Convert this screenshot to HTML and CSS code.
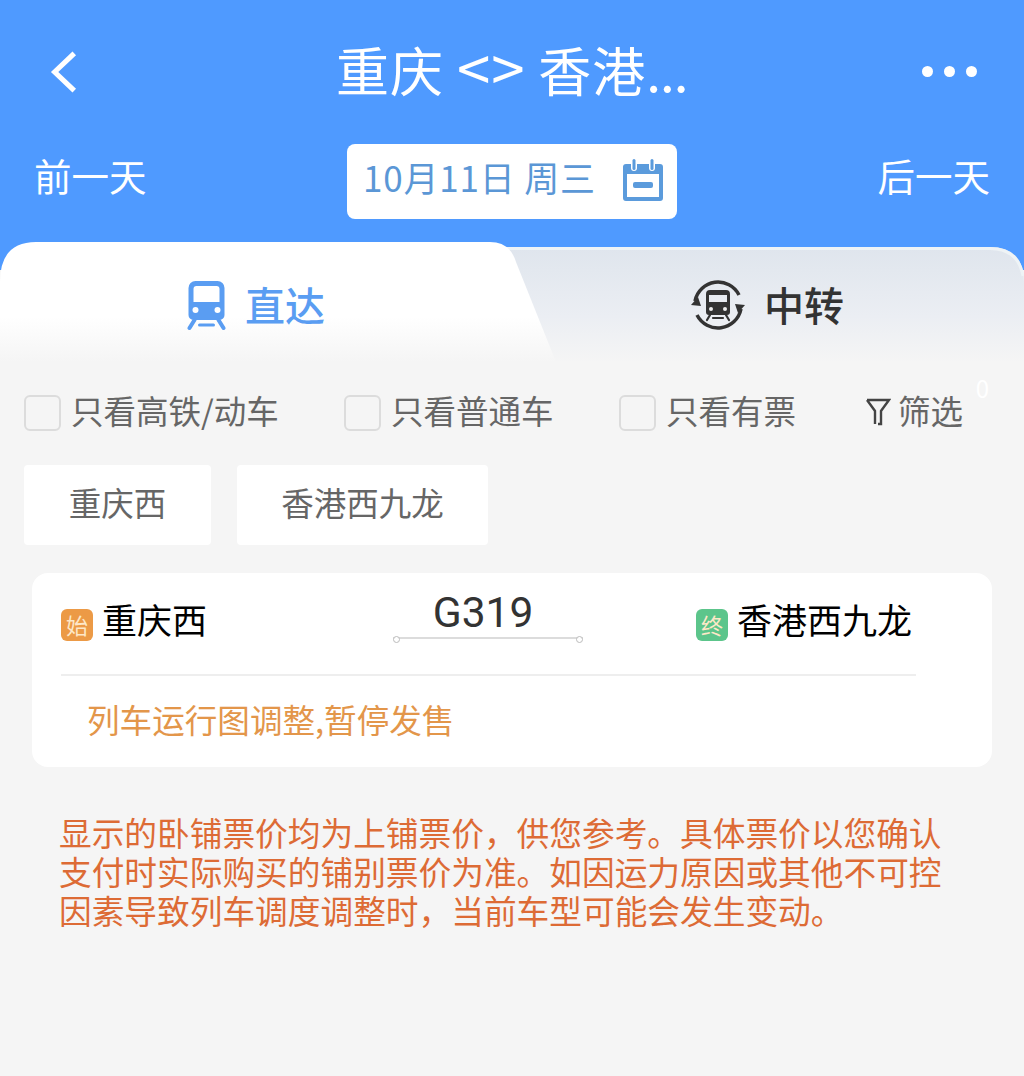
FILE: index.html
```html
<!DOCTYPE html>
<html lang="zh-CN">
<head>
    <meta charset="UTF-8">
    <meta name="viewport" content="width=device-width, initial-scale=1.0">
    <title>重庆 &lt;&gt; 香港</title>
    <link rel="stylesheet" href="styles.css">
</head>
<body>
    <header class="header">
        <div class="nav">
            <svg class="back" viewBox="0 0 30 44"><path d="M26 2 L5 22 L26 42" fill="none" stroke="#fff" stroke-width="5.5"/></svg>
            <h1 class="title">重庆 <span class="arrows">&lt;&gt;</span> 香港<span class="dots">...</span></h1>
            <div class="more"><span></span><span></span><span></span></div>
        </div>
        <div class="dates">
            <span class="day-link">前一天</span>
            <div class="date-box">
                <span>10月11日 周三</span>
                <svg class="cal" viewBox="0 0 42 44">
                    <path d="M4 6 H38 A3 3 0 0 1 41 9 V40 A3 3 0 0 1 38 43 H4 A3 3 0 0 1 1 40 V9 A3 3 0 0 1 4 6 Z M5 16 V39 H37 V16 Z" fill="#5b9bdc" fill-rule="evenodd"/>
                    <rect x="9" y="0" width="6" height="13" rx="3" fill="#fff"/>
                    <rect x="27" y="0" width="6" height="13" rx="3" fill="#fff"/>
                    <rect x="10.5" y="1" width="3" height="11" rx="1.5" fill="#5b9bdc"/>
                    <rect x="28.5" y="1" width="3" height="11" rx="1.5" fill="#5b9bdc"/>
                    <rect x="11" y="24" width="20" height="6" rx="2" fill="#5b9bdc"/>
                </svg>
            </div>
            <span class="day-link">后一天</span>
        </div>
    </header>

    <div class="tabs">
        <svg class="tabs-bg" viewBox="0 0 1024 120" preserveAspectRatio="none">
            <defs>
                <linearGradient id="greyFade" x1="0" y1="0" x2="0" y2="1">
                    <stop offset="0" stop-color="#dfe5ed"/>
                    <stop offset="0.6" stop-color="#ebeef3"/>
                    <stop offset="1" stop-color="#f5f5f5"/>
                </linearGradient>
                <linearGradient id="whiteFade" x1="0" y1="0" x2="0" y2="1">
                    <stop offset="0" stop-color="#fff"/>
                    <stop offset="0.62" stop-color="#fff"/>
                    <stop offset="1" stop-color="#f5f5f5"/>
                </linearGradient>
            </defs>
            <path d="M480 5 H990 Q1024 5 1024 40 V120 H480 Z" fill="url(#greyFade)"/>
            <path d="M480 6.5 H990 Q1018 6.5 1023 34" fill="none" stroke="#eef3f6" stroke-width="3"/>
            <path d="M0 120 V40 Q0 0 36 0 H490 Q510 0 516 20 L556 120 Z" fill="url(#whiteFade)"/>
        </svg>
        <div class="tab tab-on">
            <svg class="tab-icon" viewBox="0 0 40 50">
                <path d="M9 1 H31 A7 7 0 0 1 38 8 V35 A5 5 0 0 1 33 40 H7 A5 5 0 0 1 2 35 V8 A7 7 0 0 1 9 1 Z M7 9 V22 H33 V9 A3 3 0 0 0 30 6 H10 A3 3 0 0 0 7 9 Z" fill="#5a9df2" fill-rule="evenodd"/>
                <circle cx="9" cy="30" r="3" fill="#fff"/>
                <circle cx="31" cy="30" r="3" fill="#fff"/>
                <path d="M8 40 L3 48 M32 40 L37 48" stroke="#5a9df2" stroke-width="4" stroke-linecap="round"/>
                <path d="M13 45 H27" stroke="#5a9df2" stroke-width="3" stroke-linecap="round"/>
            </svg>
            <span>直达</span>
        </div>
        <div class="tab tab-off">
            <svg class="tab-icon-round" viewBox="0 0 56 52">
                <path d="M5 22 A23.5 23.5 0 0 1 49 16" fill="none" stroke="#333" stroke-width="3.5"/>
                <path d="M51 30 A23.5 23.5 0 0 1 7 36" fill="none" stroke="#333" stroke-width="3.5"/>
                <path d="M1 26 L8 18 L11 27 Z M55 26 L48 34 L45 25 Z" fill="#333"/>
                <path d="M20 11 H36 A4 4 0 0 1 40 15 V33 A3 3 0 0 1 37 36 H19 A3 3 0 0 1 16 33 V15 A4 4 0 0 1 20 11 Z M19 16 V23 H37 V16 Z" fill="#333" fill-rule="evenodd"/>
                <circle cx="21" cy="30" r="2" fill="#eee"/>
                <circle cx="35" cy="30" r="2" fill="#eee"/>
                <path d="M20 36 L17 41 M36 36 L39 41 M23 39 H33" stroke="#333" stroke-width="2.2" stroke-linecap="round"/>
            </svg>
            <span>中转</span>
        </div>
    </div>

    <div class="filters">
        <label class="check check-a"><i class="box"></i>只看高铁/动车</label>
        <label class="check check-b"><i class="box"></i>只看普通车</label>
        <label class="check check-c"><i class="box"></i>只看有票</label>
        <div class="screen">
            <svg class="funnel" viewBox="0 0 26 30"><path d="M2 3 H24 L16 14 V27 H13 M16 14 M10 27 V14 L2 3" fill="none" stroke="#444" stroke-width="2.4"/></svg>
            <span>筛选</span>
            <sup class="count">0</sup>
        </div>
    </div>

    <div class="chips">
        <div class="chip chip-start">重庆西</div>
        <div class="chip chip-end">香港西九龙</div>
    </div>

    <section class="card">
        <div class="route">
            <div class="stop stop-from">
                <span class="badge badge-start">始</span>
                <span>重庆西</span>
            </div>
            <div class="train">
                <div class="train-no">G319</div>
                <div class="train-line"></div>
            </div>
            <div class="stop stop-to">
                <span class="badge badge-end">终</span>
                <span>香港西九龙</span>
            </div>
        </div>
        <div class="status">列车运行图调整,暂停发售</div>
    </section>

    <p class="notice">显示的卧铺票价均为上铺票价，供您参考。具体票价以您确认<br>支付时实际购买的铺别票价为准。如因运力原因或其他不可控<br>因素导致列车调度调整时，当前车型可能会发生变动。</p>
</body>
</html>
```

FILE: styles.css
```css
* {
    box-sizing: border-box;
}
html, body {
    margin: 0;
    height: 1076px;
    overflow: hidden;
}
body {
    background-color: #f5f5f5;
    font-family: "Noto Sans CJK SC", "Noto Sans", sans-serif;
}
.header {
    height: 270px;
    background-color: #4f9aff;
    padding-top: 30px;
    color: #fff;
}
.nav {
    display: flex;
    align-items: center;
    height: 84px;
    padding: 0 47px 0 50px;
}
.back {
    width: 28px;
    height: 42px;
}
.title {
    margin: -6px 0 0 258px;
    font-size: 53px;
    font-weight: 400;
    letter-spacing: 1px;
    line-height: 84px;
    white-space: nowrap;
}
.arrows {
    font-size: 60px;
    line-height: 60px;
}
.dots {
    letter-spacing: -1px;
}
.more {
    display: flex;
    gap: 11px;
    margin-left: auto;
    margin-top: -2px;
}
.more span {
    width: 11px;
    height: 11px;
    border-radius: 50%;
    background-color: #fff;
}
.dates {
    display: flex;
    align-items: center;
    justify-content: space-between;
    height: 76px;
    margin-top: 29px;
    padding: 0 34px;
}
.day-link {
    margin-top: -12px;
    font-size: 37.5px;
    line-height: 76px;
}
.date-box {
    display: flex;
    align-items: center;
    gap: 26px;
    width: 330px;
    height: 75px;
    padding-left: 16px;
    background-color: #fff;
    border-radius: 8px;
    color: #5b97d6;
    font-size: 35px;
    letter-spacing: 0.8px;
    white-space: nowrap;
}
.date-box span {
    margin-top: -10px;
}
.cal {
    width: 42px;
    height: 44px;
    flex: none;
    margin-top: -3px;
}
.tabs {
    position: relative;
    display: flex;
    height: 113px;
    margin-top: -28px;
}
.tabs-bg {
    position: absolute;
    left: 0;
    top: 0;
    width: 100%;
    height: 120px;
}
.tab {
    position: relative;
    display: flex;
    align-items: center;
    height: 126px;
    font-size: 40px;
    font-weight: 500;
}
.tab-on {
    width: 512px;
    padding-left: 186px;
    gap: 18px;
    color: #5a9df2;
}
.tab-off {
    flex: 1;
    padding-left: 178px;
    gap: 18px;
    color: #333;
}
.tab span {
    margin-top: -2px;
}
.tab-icon {
    width: 41px;
    height: 50px;
}
.tab-icon-round {
    width: 56px;
    height: 52px;
}
.filters {
    display: flex;
    align-items: center;
    height: 40px;
    margin-top: 34px;
    padding-left: 24px;
    color: #666;
    font-size: 32.5px;
}
.check {
    display: flex;
    align-items: center;
    gap: 10px;
    white-space: nowrap;
}
.check-a {
    width: 320px;
}
.check-b {
    width: 275px;
}
.check-c {
    width: 246px;
}
.box {
    width: 37px;
    height: 36px;
    flex: none;
    margin-top: 8px;
    border: 2px solid #dcdcdc;
    border-radius: 6px;
}
.screen {
    position: relative;
    display: flex;
    align-items: center;
    gap: 7px;
}
.funnel {
    width: 26px;
    height: 30px;
    margin-top: 6px;
}
.count {
    position: absolute;
    right: -26px;
    top: -12px;
    color: #fff;
    font-size: 24px;
    line-height: 28px;
}
.chips {
    display: flex;
    gap: 26px;
    margin-top: 36px;
    padding-left: 24px;
}
.chip {
    height: 80px;
    background-color: #fff;
    border-radius: 4px;
    color: #666;
    font-size: 32.5px;
    line-height: 74px;
    text-align: center;
}
.chip-start {
    width: 187px;
}
.chip-end {
    width: 251px;
}
.card {
    height: 194px;
    margin: 28px 32px 0;
    padding: 0 76px 0 29px;
    background-color: #fff;
    border-radius: 16px;
}
.route {
    position: relative;
    display: flex;
    align-items: center;
    height: 103px;
    border-bottom: 2px solid #eee;
}
.stop {
    display: flex;
    align-items: center;
    gap: 9px;
    color: #000;
    font-size: 35px;
    white-space: nowrap;
}
.stop > span:last-child {
    margin-top: -12px;
}
.stop-from {
    width: 332px;
    margin-top: 1px;
}
.stop-to {
    margin: 1px 0 0 113px;
}
.badge {
    width: 32px;
    height: 32px;
    margin-top: 2px;
    border-radius: 6px;
    color: #fde8c8;
    font-size: 22px;
    line-height: 30px;
    text-align: center;
}
.badge-start {
    background-color: #ec9a46;
}
.badge-end {
    background-color: #5cc58b;
}
.train {
    width: 190px;
    margin-top: -19px;
    text-align: center;
}
.train-no {
    margin-right: 10px;
    color: #333;
    font-family: Roboto, sans-serif;
    font-size: 42.5px;
    line-height: 48px;
}
.train-line {
    position: relative;
    height: 2px;
    background-color: #dcdcdc;
}
.train-line::before, .train-line::after {
    content: "";
    position: absolute;
    top: -1.5px;
    width: 5px;
    height: 5px;
    background-color: #fff;
    border: 1px solid #bbb;
    border-radius: 50%;
}
.train-line::before {
    left: 0;
}
.train-line::after {
    right: 0;
}
.status {
    padding: 18px 0 0 26px;
    color: #e3964a;
    font-size: 32.6px;
    line-height: 50px;
}
.notice {
    margin: 45px 0 0 59px;
    color: #dd6b35;
    font-size: 32.7px;
    line-height: 39px;
    white-space: nowrap;
}
```
